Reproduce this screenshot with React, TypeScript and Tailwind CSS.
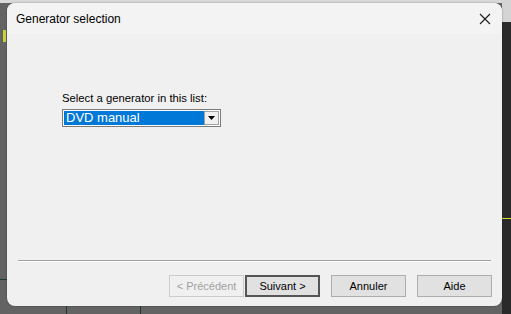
import React from "react";

const base =
  "h-[22px] w-[75px] flex items-center justify-center text-[11px] border";

export default function App() {
  return (
    <div
      className="relative w-[511px] h-[314px] overflow-hidden bg-[#636363]"
      style={{ fontFamily: '"Liberation Sans", Arial, sans-serif' }}
    >
      {/* desktop background pieces */}
      <div className="absolute left-0 top-0 w-[511px] h-[3px] bg-[#d9d9d9]" />
      <div className="absolute left-[3px] top-[30px] w-[3px] h-[12px] bg-[#c8d23a]" />
      <div className="absolute right-0 top-[22px] w-[9px] h-[292px] bg-[#2a2a2a]" />
      <div className="absolute right-0 top-0 w-[9px] h-[22px] bg-[#d4d4d4]" />
      <div className="absolute right-0 top-[218px] w-[9px] h-[1px] bg-[#d9e021]" />
      <div className="absolute left-[66px] top-[306px] w-px h-[8px] bg-[#1f3a32]" />
      <div className="absolute left-[140px] top-[306px] w-px h-[8px] bg-[#1f3a32]" />
      <div className="absolute left-[0px] top-[279px] w-[7px] h-px bg-[#1f3a32]" />

      {/* dialog */}
      <div className="absolute left-[7px] top-[3px] w-[495px] h-[303px] rounded-[8px] bg-[#f0f0f0] flex flex-col overflow-hidden shadow-[0_0_2px_rgba(0,0,0,0.4)]">
        <div className="h-[31px] bg-[#f3f3f3] flex items-center justify-between pl-[9px] pr-[8px]">
          <span className="text-[12px] text-black">Generator selection</span>
          <svg width="12" height="12" viewBox="0 0 12 12" className="mr-[3px]">
            <path d="M1 1 L11 11 M11 1 L1 11" stroke="#1a1a1a" strokeWidth="1.1" />
          </svg>
        </div>
        <div className="flex-1 flex flex-col">
          <div className="pl-[55px] pt-[58px] h-[226px]">
            <div className="text-[11.3px] text-black leading-[13px]">
              Select a generator in this list:
            </div>
            <div className="mt-[4px] w-[159px] h-[18px] bg-white border border-[#7a7a7a] flex items-stretch p-[1px]">
              <div className="flex-1 bg-[#0078d7] text-white text-[13px] leading-[14px] pl-[2px]">
                DVD manual
              </div>
              <div className="w-[15px] bg-[#f0f0f0] border border-[#a0a0a0] flex items-center justify-center">
                <svg width="7" height="4" viewBox="0 0 7 4">
                  <path d="M0 0 H7 L3.5 4 Z" fill="#000" />
                </svg>
              </div>
            </div>
          </div>
          <div className="mx-[11px] h-px bg-[#a0a0a0] border-b border-white box-content" />
          <div className="flex items-center justify-end pr-[10px] pt-[13px]">
            <div className={base + " text-[#a0a0a0] border-[#cccccc] bg-[#f0f0f0]"}>
              &lt; Précédent
            </div>
            <div className={base + " text-black bg-[#e1e1e1] border-2 border-[#555555] ml-[1px]"}>
              Suivant &gt;
            </div>
            <div className={base + " text-black bg-[#e1e1e1] border-[#adadad] ml-[11px]"}>
              Annuler
            </div>
            <div className={base + " text-black bg-[#e1e1e1] border-[#adadad] ml-[11px]"}>
              Aide
            </div>
          </div>
        </div>
      </div>
    </div>
  );
}
